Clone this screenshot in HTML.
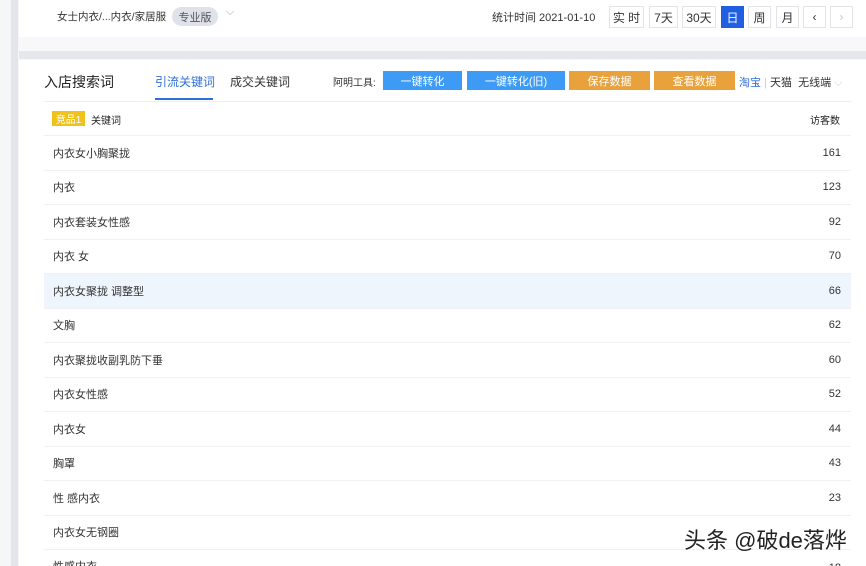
<!DOCTYPE html>
<html style="width:866px;height:566px;overflow:hidden"><head><meta charset="utf-8"><style>
*{margin:0;padding:0;box-sizing:border-box}
body{width:866px;height:566px;overflow:hidden;background:#f5f6f8;font-family:"Liberation Sans","Noto Sans CJK SC",sans-serif;position:relative;color:#333}
.strip{position:absolute;left:11px;top:0;width:7px;height:566px;background:#e4e5ea}
.top{position:absolute;left:19px;top:0;width:847px;height:37px;background:#fff}
.gap{position:absolute;left:19px;top:37px;width:847px;height:15px;background:#f8f8fa}
.band{position:absolute;left:19px;top:51px;width:847px;height:8px;background:#e6e7eb}
.card{position:absolute;left:19px;top:60px;width:847px;height:506px;background:#fff}
.a{position:absolute;white-space:nowrap}
.c{display:flex;align-items:center;justify-content:center}
.btn{position:absolute;top:6px;height:22px;border:1px solid #e3e4e8;background:#fff;font-size:12px;color:#333}
.tb{position:absolute;top:71px;height:19px;color:#fff;font-size:11px}
.row{position:absolute;left:44px;width:807px;height:34.5px;border-top:1px solid #f0f1f3;font-size:11px;color:#333;display:flex;align-items:center;justify-content:space-between;padding:0 10px 0 9px;overflow:hidden}
</style></head><body>
<div class="strip"></div>
<div class="top"></div><div class="gap"></div><div class="band"></div><div class="card"></div>
<div class="a" style="left:57px;top:9px;font-size:10.5px;color:#333">女士内衣/...内衣/家居服</div>
<div class="a c" style="left:172px;top:7px;width:46px;height:19px;border-radius:10px;background:#dfe2ea;font-size:11px;color:#555">专业版</div>
<div class="a" style="left:226px;top:6px;font-size:11px;color:#aaa">⌵</div>
<div class="a" style="left:492px;top:9px;font-size:11px;color:#333">统计时间 2021-01-10</div>
<div class="btn c" style="left:609px;width:35px">实 时</div>
<div class="btn c" style="left:649px;width:29px">7天</div>
<div class="btn c" style="left:682px;width:34px">30天</div>
<div class="btn c" style="left:721px;width:23px;background:#1f5fe0;border-color:#1f5fe0;color:#fff">日</div>
<div class="btn c" style="left:748px;width:23px">周</div>
<div class="btn c" style="left:776px;width:23px">月</div>
<div class="btn c" style="left:803px;width:23px">‹</div>
<div class="btn c" style="left:830px;width:23px;color:#ccc">›</div>
<div class="a" style="left:44px;top:72px;font-size:14px;color:#222">入店搜索词</div>
<div class="a" style="left:155px;top:73px;font-size:12px;color:#2f6fd8">引流关键词</div>
<div class="a" style="left:155px;top:98px;width:58px;height:2px;background:#2f6fd8"></div>
<div class="a" style="left:230px;top:73px;font-size:12px;color:#333">成交关键词</div>
<div class="a" style="left:44px;top:101px;width:807px;height:1px;background:#eee"></div>
<div class="a" style="left:333px;top:74px;font-size:10px;color:#333">阿明工具:</div>
<div class="tb c" style="left:383px;width:79px;background:#3d9bf5">一键转化</div>
<div class="tb c" style="left:467px;width:98px;background:#3d9bf5">一键转化(旧)</div>
<div class="tb c" style="left:569px;width:81px;background:#e9a23b">保存数据</div>
<div class="tb c" style="left:654px;width:81px;background:#e9a23b">查看数据</div>
<div class="a" style="left:739px;top:74px;font-size:11px;color:#2f6fd8">淘宝 <span style="color:#ccc">|</span> <span style="color:#333">天猫&nbsp;&nbsp;无线端</span> <span style="color:#ccc">⌵</span></div>
<div class="a c" style="left:52px;top:111px;width:33px;height:15px;background:#f2c21c;color:#fff;font-size:10px">竞品1</div>
<div class="a" style="left:91px;top:112px;font-size:10px;color:#222">关键词</div>
<div class="a" style="left:810px;top:112px;font-size:10px;color:#222">访客数</div>
<div class="row" style="top:135px"><span>内衣女小胸聚拢</span><span>161</span></div>
<div class="row" style="top:169.5px"><span>内衣</span><span>123</span></div>
<div class="row" style="top:204px"><span>内衣套装女性感</span><span>92</span></div>
<div class="row" style="top:238.5px"><span>内衣 女</span><span>70</span></div>
<div class="row" style="top:273px;background:#eef5fd"><span>内衣女聚拢 调整型</span><span>66</span></div>
<div class="row" style="top:307.5px"><span>文胸</span><span>62</span></div>
<div class="row" style="top:342px"><span>内衣聚拢收副乳防下垂</span><span>60</span></div>
<div class="row" style="top:376.5px"><span>内衣女性感</span><span>52</span></div>
<div class="row" style="top:411px"><span>内衣女</span><span>44</span></div>
<div class="row" style="top:445.5px"><span>胸罩</span><span>43</span></div>
<div class="row" style="top:480px"><span>性 感内衣</span><span>23</span></div>
<div class="row" style="top:514.5px"><span>内衣女无钢圈</span><span></span></div>
<div class="row" style="top:549px;height:17px;align-items:flex-end"><span style="position:relative;top:8px">性感内衣</span><span style="position:relative;top:8px">18</span></div>
<div class="a" style="left:684px;top:523px;font-size:22px;color:#222;text-shadow:0 0 2px #fff,0 0 2px #fff">头条 @破de落烨</div>
</body></html>
